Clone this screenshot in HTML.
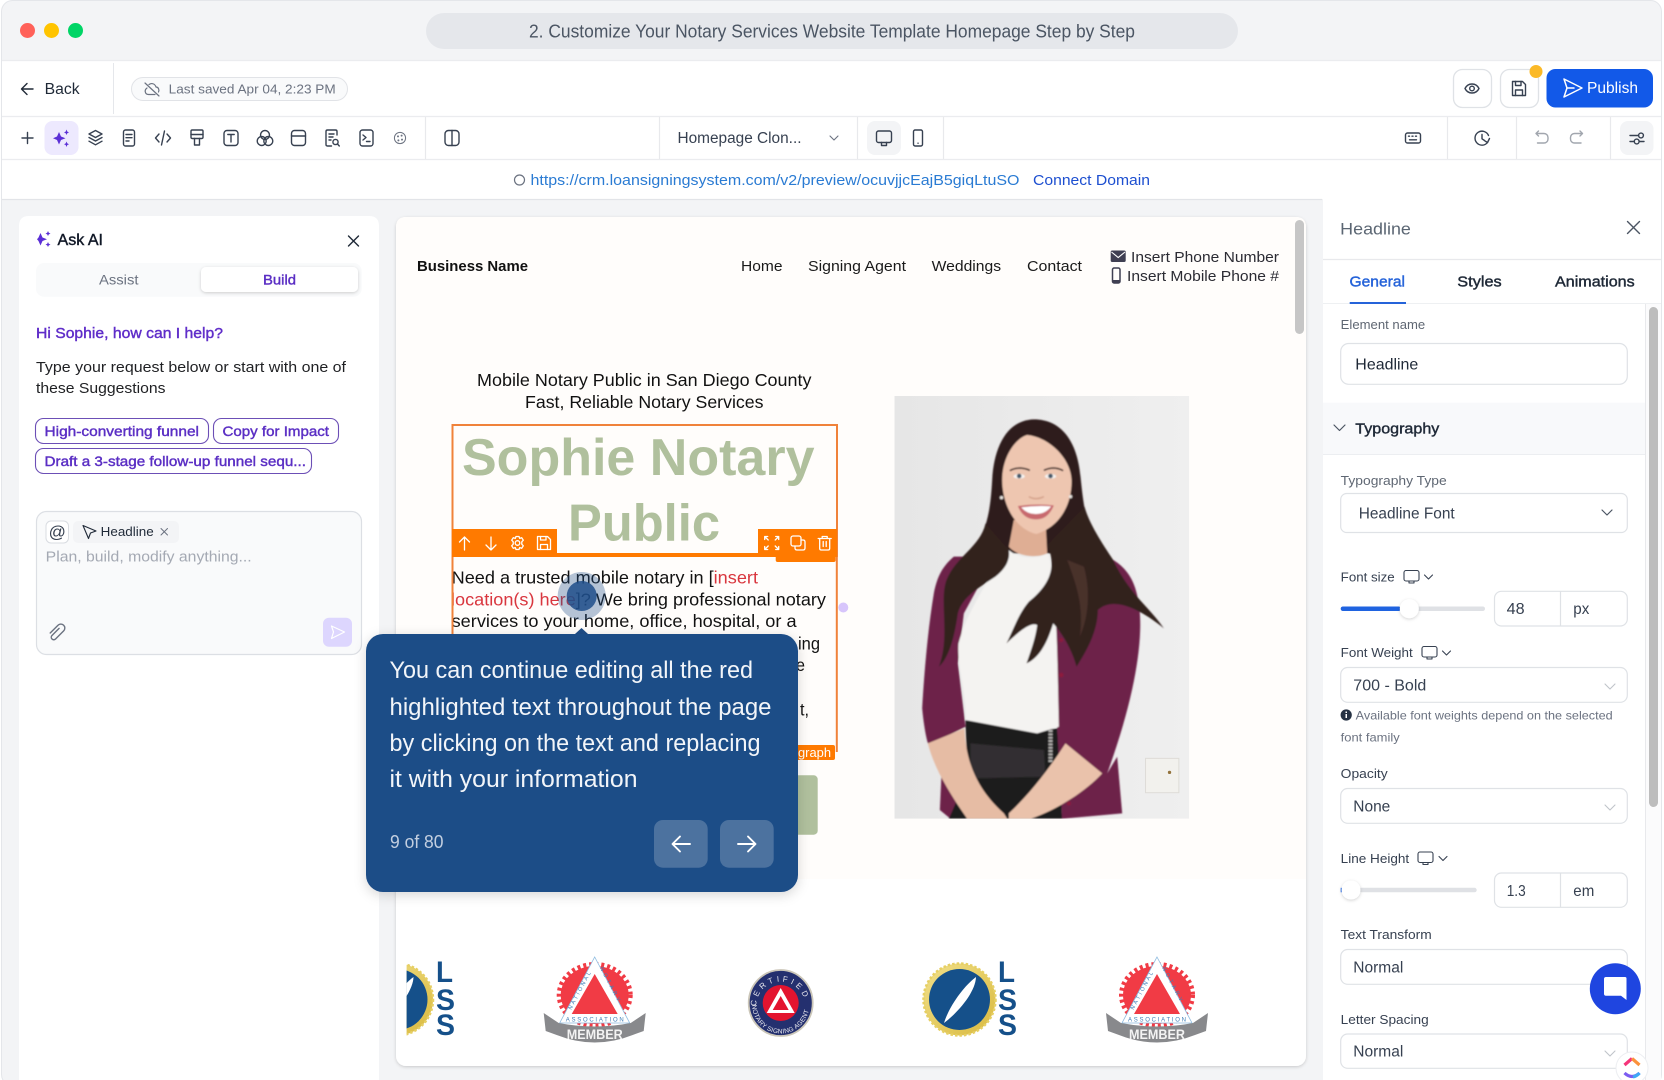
<!DOCTYPE html>
<html lang="en"><head><meta charset="utf-8"><title>Notary Website Builder</title>
<style>
html,body{margin:0;padding:0;background:#fff;width:1664px;height:1080px;overflow:hidden}
svg{display:block}
text{font-family:"Liberation Sans",sans-serif}
.m{stroke:currentColor;stroke-width:.42}
.i{fill:none;stroke:#374151;stroke-width:1.4;stroke-linecap:round;stroke-linejoin:round}
.w{fill:none;stroke:#fff;stroke-width:1.5;stroke-linecap:round;stroke-linejoin:round}
.box{fill:#fff;stroke:#dfe2e6;stroke-width:1.2}
.lb{font-size:13px;fill:#5f6773}
.val{font-size:15.5px;fill:#374151}
</style></head><body>
<svg xmlns="http://www.w3.org/2000/svg" width="1664" height="1080" viewBox="0 0 1664 1080">
<defs>
<filter id="sh" x="-10%" y="-10%" width="120%" height="125%"><feDropShadow dx="0" dy="3" stdDeviation="6" flood-color="#000" flood-opacity=".16"/></filter>
<filter id="sh2" x="-20%" y="-30%" width="140%" height="170%"><feDropShadow dx="0" dy="1" stdDeviation="1.5" flood-color="#000" flood-opacity=".18"/></filter>
<filter id="soft"><feGaussianBlur stdDeviation="2.4"/></filter>
<linearGradient id="wall" x1="0" x2="1" y1="0" y2="0"><stop offset="0" stop-color="#e6e6e6"/><stop offset="1" stop-color="#efefef"/></linearGradient>
<linearGradient id="gold" x1="0" x2="1" y1="0" y2="1"><stop offset="0" stop-color="#f1e08a"/><stop offset="1" stop-color="#d9b93e"/></linearGradient>
<clipPath id="c1"><rect x="406.6" y="950" width="60" height="100"/></clipPath>
<clipPath id="photoClip"><rect x="72" y="48" width="884" height="1268"/></clipPath>
<path id="pinTop" d="M-24.5 3A24.5 24.5 0 0 1 24.5 3"/>
<path id="pinBot" d="M-28.5 2A28.5 28.5 0 0 0 28.5 2"/>
</defs>

<!-- window -->
<rect x="1.5" y=".5" width="1660" height="1085" rx="11" fill="#f3f4f6" stroke="#e4e6ea"/>
<rect x="2" y="60" width="1659" height="139" fill="#fff"/>
<path d="M2 60.5H1661M2 116.5H1661M2 159.5H1661" stroke="#ebecef" stroke-width="1.2"/>
<path d="M2 199.5H1322" stroke="#e2e4e8" stroke-width="1.2"/>

<!-- title bar -->
<circle cx="27.5" cy="30.5" r="7.5" fill="#ff6159"/><circle cx="51.5" cy="30.5" r="7.5" fill="#ffc400"/><circle cx="75.5" cy="30.5" r="7.5" fill="#00d566"/>
<rect x="426" y="13" width="812" height="36" rx="18" fill="#e5e7eb"/>
<text x="529" y="37.5" font-size="18" fill="#4b5563" textLength="606" lengthAdjust="spacingAndGlyphs">2. Customize Your Notary Services Website Template Homepage Step by Step</text>

<!-- header -->
<path class="i" d="M33 89H22M27 83.5L21.5 89L27 94.5" style="stroke:#1f2937"/>
<text x="44.6" y="94" font-size="15.5" fill="#1f2937" textLength="35" lengthAdjust="spacingAndGlyphs">Back</text>
<path d="M113.5 63V114" stroke="#e5e7eb"/>
<rect x="131.5" y="77.5" width="216" height="23" rx="11.5" fill="#f9fafb" stroke="#e1e3e7"/>
<g transform="translate(152,89)" class="i" style="stroke:#6b7280;stroke-width:1.2"><path d="M-7 -6L7 7M-3 -4.5C0 -6.5 3 -5 4 -2C6.5 -2 7.5 1 6.5 3M3 5.5H-3.5C-7 5.5 -8 1 -5 -1"/></g>
<text x="168.7" y="93.5" font-size="13" fill="#6b7280" textLength="167" lengthAdjust="spacingAndGlyphs">Last saved Apr 04, 2:23 PM</text>

<rect x="1453.5" y="69.5" width="38" height="38" rx="9" fill="#fff" stroke="#dfe2e6" stroke-width="1.3"/>
<g transform="translate(1472,88.5)" class="i"><path d="M-7 0C-4 -6 4 -6 7 0C4 6 -4 6 -7 0Z"/><circle r="2.3"/></g>
<rect x="1500.5" y="69.5" width="38" height="38" rx="9" fill="#fff" stroke="#dfe2e6" stroke-width="1.3"/>
<g transform="translate(1519,88.5)" class="i"><path d="M-6.5 -7H3.5L6.5 -4V7H-6.5Z"/><path d="M-3.5 -7V-3H2V-7M-3.5 7V1.5H3.5V7"/></g>
<circle cx="1536" cy="71.5" r="6.5" fill="#fbb927"/>
<rect x="1546.5" y="69" width="106.5" height="38.5" rx="9" fill="#1259e8"/>
<path class="w" d="M1564 79L1582 88L1564 97L1567 88ZM1567 88H1574"/>
<text x="1587" y="93" font-size="15.5" fill="#fff" textLength="51" lengthAdjust="spacingAndGlyphs">Publish</text>

<!-- toolbar -->
<rect x="44.5" y="121" width="34" height="34" rx="8" fill="#ede9fe"/>
<rect x="867" y="121" width="34" height="34" rx="8" fill="#f3f4f6"/>
<rect x="1620" y="121" width="33.5" height="34" rx="8" fill="#f3f4f6"/>
<path d="M425.5 117V159M659.5 117V159M857.5 117V159M943.5 117V159M1447.5 117V159M1516.5 117V159M1610.5 117V159" stroke="#e8e9ec" stroke-width="1.2"/>
<path class="i" d="M27.5 132.5V143.5M22 138H33" style="stroke-width:1.4"/>
<g transform="translate(62,138)" fill="#5b2fd6"><path d="M-3 -6L-1 -1.5L3.5 0.3L-1 2L-3 6.5L-5 2L-9 0.3L-5 -1.5Z"/><path d="M4.5 -8.5L5.3 -6.4L7 -5.6L5.3 -4.8L4.5 -3L3.7 -4.8L2 -5.6L3.7 -6.4Z"/><path d="M4.5 3.5L5.3 5.4L7 6.2L5.3 7L4.5 9L3.7 7L2 6.2L3.7 5.4Z"/></g>
<g class="i">
<g transform="translate(95.5,138)"><path d="M0 -7.5L6.5 -4L0 -.5L-6.5 -4Z"/><path d="M-6.5 -.5L0 3L6.5 -.5M-6.5 3.2L0 6.8L6.5 3.2"/></g>
<g transform="translate(129,138)"><rect x="-5.5" y="-8" width="11" height="16" rx="2"/><path d="M-3 -3.5H3M-3 -.3H3M-3 3H0"/></g>
<g transform="translate(163,138)"><path d="M-4 -4L-7.5 0L-4 4M4 -4L7.5 0L4 4M1.5 -7L-1.5 7"/></g>
<g transform="translate(197,138)"><rect x="-6" y="-8" width="12" height="8.5" rx="1.2"/><path d="M-6 -3.5H6M-2.5 .5V7H2.5V.5"/></g>
<g transform="translate(231,138)"><rect x="-7" y="-7.5" width="14" height="15" rx="3"/><path d="M-3.2 -3.5H3.2M0 -3.5V4"/></g>
<g transform="translate(265,138)"><circle cy="-3" r="4.5"/><circle cx="-3.3" cy="3" r="4.5"/><circle cx="3.3" cy="3" r="4.5"/></g>
<g transform="translate(298.5,138)"><rect x="-7" y="-7.5" width="14" height="15" rx="3"/><path d="M-7 -2H7"/></g>
<g transform="translate(332,138)"><path d="M5 -3V-6.5C5 -7.4 4.4 -8 3.5 -8H-4.5C-5.4 -8 -6 -7.4 -6 -6.5V6.5C-6 7.4 -5.4 8 -4.5 8H-.5"/><path d="M-3 -4H2M-3 -1H1M-3 2H-1"/><circle cx="3.5" cy="4" r="2.6"/><path d="M5.5 6L7.3 8"/></g>
<g transform="translate(366,138)"><rect x="-6" y="-8" width="13" height="16" rx="2.5"/><path d="M-3 -3L0 -.5L-3 2M0.5 3.5H4"/></g>
<g transform="translate(400,138)" style="stroke-width:1;stroke:#6b7280"><circle r="5.6"/><circle cx="-2" cy="-1.6" r=".5"/><circle cx="1.6" cy="-2.4" r=".5"/><circle cx="2" cy="1.6" r=".5"/><circle cx="-1.6" cy="2.4" r=".5"/></g>
<g transform="translate(452,138)"><rect x="-7" y="-7.5" width="14" height="15" rx="3.5"/><path d="M0 -7.5V7.5"/></g>
<g transform="translate(884,138)"><rect x="-7.5" y="-7" width="15" height="11.5" rx="2"/><path d="M-2.5 4.5V7.5H2.5V4.5"/></g>
<g transform="translate(918,138)"><rect x="-4.5" y="-8" width="9" height="16" rx="1.6"/><path d="M0 5.2H.1"/></g>
<g transform="translate(1413,138)"><rect x="-7.5" y="-5" width="15" height="10" rx="2"/><path d="M-4.5 -1.8H-3.5M-1 -1.8H0M2.5 -1.8H3.5M-3.5 1.8H3.5"/></g>
<g transform="translate(1482,138)"><path d="M5.5 4.5A7 7 0 1 1 6.5 -2.5"/><path d="M0 -3.5V.8L2.5 2.5M7.5 .5L5.5 4.5L3 3"/></g>
<g transform="translate(1542.5,138)" style="stroke:#a1a6ae"><path d="M-4 -7L-6.5 -4.5L-4 -2M-6.5 -4.5H1.5A4 4 0 0 1 5.5 -.5V1A4 4 0 0 1 1.5 5H-5"/></g>
<g transform="translate(1576,138)" style="stroke:#a1a6ae"><path d="M4 -7L6.5 -4.5L4 -2M6.5 -4.5H-1.5A4 4 0 0 0 -5.5 -.5V1A4 4 0 0 0 -1.5 5H5"/></g>
<g transform="translate(1637,138)"><path d="M-7 -2.5H1.5M-7 3.5H-3M2.8 3.5H7"/><circle cx="4" cy="-2.5" r="2.4"/><circle cx="-.3" cy="3.5" r="2.4"/></g>
</g>
<text x="677.5" y="143" font-size="15.5" fill="#374151" textLength="124" lengthAdjust="spacingAndGlyphs">Homepage Clon...</text>
<path class="i" d="M830 136L834 140L838 136" style="stroke:#6b7280;stroke-width:1.1"/>

<!-- url row -->
<circle cx="519.5" cy="180" r="5" fill="none" stroke="#6b7280" stroke-width="1.2"/>
<text x="530.5" y="185.2" font-size="15" fill="#2a7bd3" textLength="489" lengthAdjust="spacingAndGlyphs">https://crm.loansigningsystem.com/v2/preview/ocuvjjcEajB5giqLtuSO</text>
<text x="1033" y="185.2" font-size="15" fill="#1d4fd0" textLength="117" lengthAdjust="spacingAndGlyphs">Connect Domain</text>

<!-- Ask AI panel -->
<path d="M19 1080V226Q19 216 29 216H369Q379 216 379 226V1080Z" fill="#fff"/>
<g transform="translate(43.5,239)" fill="#5b2fd6"><path d="M-3 -6L-1 -1.5L3.5 0.3L-1 2L-3 6.5L-5 2L-6.5 .3L-5 -1.5Z"/><path d="M4.5 -8L5.3 -6.2L7 -5.4L5.3 -4.6L4.5 -3L3.7 -4.6L2 -5.4L3.7 -6.2Z"/><path d="M4.5 3L5.3 4.8L7 5.6L5.3 6.4L4.5 8L3.7 6.4L2 5.6L3.7 4.8Z"/></g>
<text x="57.5" y="245" font-size="16" fill="#111827" class="m" style="color:#111827" textLength="45.5" lengthAdjust="spacingAndGlyphs">Ask AI</text>
<path class="i" d="M348.5 236L358.5 246M358.5 236L348.5 246" style="stroke:#1f2937"/>
<rect x="36" y="263" width="325.7" height="33.7" rx="8" fill="#f9fafb"/>
<rect x="201" y="267" width="157" height="25" rx="5" fill="#fff" filter="url(#sh2)"/>
<text x="99" y="284.7" font-size="14" fill="#6b7280" textLength="39.5" lengthAdjust="spacingAndGlyphs">Assist</text>
<text x="263" y="284.7" font-size="14" fill="#5b2fc4" class="m" style="color:#5b2fc4" textLength="33" lengthAdjust="spacingAndGlyphs">Build</text>
<text x="36" y="338" font-size="15" fill="#5f2dc9" class="m" style="color:#5f2dc9" textLength="187" lengthAdjust="spacingAndGlyphs">Hi Sophie, how can I help?</text>
<text x="36" y="372" font-size="15" fill="#1f2023" textLength="310" lengthAdjust="spacingAndGlyphs">Type your request below or start with one of</text>
<text x="36" y="393" font-size="15" fill="#1f2023" textLength="129.5" lengthAdjust="spacingAndGlyphs">these Suggestions</text>
<g fill="#fff" stroke="#6c4fb6" stroke-width="1.1">
<rect x="35.5" y="418.5" width="173" height="25" rx="8"/><rect x="213.5" y="418.5" width="125" height="25" rx="8"/><rect x="35.5" y="448.5" width="276" height="25" rx="8"/></g>
<g font-size="14" fill="#5b2fc4" class="m" style="color:#5b2fc4">
<text x="44.5" y="436" textLength="154.5" lengthAdjust="spacingAndGlyphs">High-converting funnel</text>
<text x="222.5" y="436" textLength="106.5" lengthAdjust="spacingAndGlyphs">Copy for Impact</text>
<text x="44.5" y="466" textLength="261.5" lengthAdjust="spacingAndGlyphs">Draft a 3-stage follow-up funnel sequ...</text></g>
<rect x="36.5" y="511.5" width="325" height="143" rx="10" fill="#f9fafb" stroke="#dcdfe4" stroke-width="1.2"/>
<rect x="46" y="521" width="22.5" height="22" rx="5" fill="#fff" stroke="#d9dce1"/>
<text x="57.2" y="537.5" font-size="17" text-anchor="middle" fill="#374151">@</text>
<rect x="73" y="521" width="106" height="22" rx="5" fill="#f3f4f6"/>
<path class="i" d="M83 525.5L96 531L90.5 533L88.5 538.5Z" style="stroke:#1f2937;stroke-width:1.1"/>
<text x="100.7" y="536" font-size="13" fill="#1f2937" textLength="53" lengthAdjust="spacingAndGlyphs">Headline</text>
<path class="i" d="M161 528.5L167.5 535M167.5 528.5L161 535" style="stroke:#6b7280;stroke-width:1"/>
<text x="45.7" y="561.5" font-size="15" fill="#a4a9b3" textLength="206" lengthAdjust="spacingAndGlyphs">Plan, build, modify anything...</text>
<g transform="translate(58,633) rotate(45)" class="i" style="stroke:#6b7280;stroke-width:1.4"><path d="M-2.5 -4V6A2.5 2.5 0 0 0 2.5 6V-5.5A4 4 0 0 0 -5.5 -5.5V5.5"/></g>
<rect x="323" y="617.7" width="29" height="29" rx="6" fill="#ddd6fe"/>
<path class="w" d="M331.5 626L344.5 632L331.5 638.5L333.5 632Z" style="stroke-width:1.2"/>

<!-- canvas -->
<rect x="396" y="217" width="910" height="849" rx="10" fill="#fff" filter="url(#sh2)"/>
<path d="M396 879V227Q396 217 406 217H1296Q1306 217 1306 227V879Z" fill="#fffdfb"/>
<rect x="1295" y="220" width="9" height="114" rx="4.5" fill="#c6c6c6"/>

<text x="417" y="271" font-size="15" font-weight="700" fill="#111" textLength="111" lengthAdjust="spacingAndGlyphs">Business Name</text>
<g font-size="15" fill="#1a1a1a">
<text x="741" y="271" textLength="41.5" lengthAdjust="spacingAndGlyphs">Home</text>
<text x="808" y="271" textLength="98" lengthAdjust="spacingAndGlyphs">Signing Agent</text>
<text x="931.6" y="271" textLength="69.5" lengthAdjust="spacingAndGlyphs">Weddings</text>
<text x="1027" y="271" textLength="55" lengthAdjust="spacingAndGlyphs">Contact</text>
<text x="1131" y="262" textLength="148" lengthAdjust="spacingAndGlyphs" fill="#2b2b33">Insert Phone Number</text>
<text x="1127" y="281" textLength="152" lengthAdjust="spacingAndGlyphs" fill="#2b2b33">Insert Mobile Phone #</text></g>
<rect x="1110.7" y="250.5" width="15" height="11.5" rx="1.5" fill="#3f3f52"/><path d="M1111.5 252L1118.2 257.5L1125 252" fill="none" stroke="#fff" stroke-width="1.1"/>
<rect x="1112.5" y="268" width="7.5" height="15" rx="1.6" fill="none" stroke="#3f3f52" stroke-width="1.5"/><rect x="1112.5" y="280" width="7.5" height="3" fill="#3f3f52"/>

<text x="477" y="386" font-size="17.5" fill="#111" textLength="334.5" lengthAdjust="spacingAndGlyphs">Mobile Notary Public in San Diego County</text>
<text x="525" y="408" font-size="17.5" fill="#111" textLength="238.5" lengthAdjust="spacingAndGlyphs">Fast, Reliable Notary Services</text>

<!-- photo -->
<svg x="894.5" y="396" width="294.7" height="422.7" viewBox="72 48 884 1268">
<g clip-path="url(#photoClip)">
<rect x="72" y="48" width="884" height="1268" fill="url(#wall)"/>
<rect x="825" y="1135" width="100" height="103" fill="#f2f1ed" stroke="#dedcd7" stroke-width="3"/>
<circle cx="897" cy="1177" r="5" fill="#93733c"/>
<g filter="url(#soft)">
<path d="M490 118C410 120 370 200 365 300C360 390 350 440 320 490L420 520L540 520L670 480C645 420 638 370 630 290C620 180 570 118 490 118Z" fill="#2f1d1d"/>
<path d="M250 530C215 560 200 590 190 640C170 760 160 900 155 985C160 1040 170 1090 175 1095L285 1040L262 850L280 700L340 590L300 530Z" fill="#6d2149"/>
<path d="M215 1140L208 1290L240 1316L300 1200Z" fill="#6d2149"/>
<path d="M555 680L575 540L690 520C760 550 800 590 808 700C815 800 790 960 710 1180L740 1130L755 1300L575 1316L560 1060Z" fill="#6d2149"/>
<path d="M285 1020L505 1050L560 1045L575 1316L235 1316L290 1190C290 1120 285 1070 285 1020Z" fill="#1f1b1e"/>
<path d="M300 1090L520 1110L525 1190L300 1195Z" fill="#322e31"/>
<path d="M540 1050V1150" stroke="#b3b1af" stroke-width="12" stroke-dasharray="6 4"/>
<path d="M430 420L525 420L530 520C500 535 440 530 415 500Z" fill="#dfae94"/>
<path d="M405 500C435 538 500 540 532 520C558 600 560 800 565 1040L500 1060L285 1020C290 950 258 850 264 790C290 690 360 600 405 500Z" fill="#f4f3f1"/>
<path d="M172 1090L282 1045C285 1130 310 1220 400 1300L410 1316L290 1316C230 1230 190 1160 172 1090Z" fill="#e6bca4"/>
<path d="M585 1090L695 1180C650 1230 560 1290 480 1316L415 1316L415 1300C480 1240 540 1160 585 1090Z" fill="#eac2ab"/>
<path d="M345 430C330 500 255 530 228 600C205 660 240 770 205 860C240 830 255 750 262 700C275 650 330 620 375 590C400 570 420 545 415 510Z" fill="#33201f"/>
<path d="M530 495C565 570 525 625 475 665C445 700 430 745 408 790C445 755 480 725 500 735C495 775 480 815 468 850C505 835 530 790 548 730C575 760 605 810 618 860C640 825 682 760 682 690C725 650 800 680 880 745C835 680 775 640 728 540C695 490 655 430 642 380Z" fill="#33201f"/>
<path d="M590 540C620 620 640 680 628 770C655 710 660 630 640 560Z" fill="#4a302c"/>
<path d="M395 300C395 225 440 172 470 165C530 170 600 230 603 300C605 370 570 440 497 462C430 445 395 370 395 300Z" fill="#eec6b0"/>
<path d="M418 272Q445 257 478 271" fill="none" stroke="#3a2523" stroke-width="5"/>
<path d="M520 271Q550 257 578 272" fill="none" stroke="#3a2523" stroke-width="5"/>
<ellipse cx="446" cy="289" rx="17" ry="7" fill="#f6f3f1"/><circle cx="446" cy="288" r="7" fill="#45596a"/>
<ellipse cx="540" cy="289" rx="17" ry="7" fill="#f6f3f1"/><circle cx="540" cy="288" r="7" fill="#45596a"/>
<path d="M475 350Q497 362 520 350" fill="none" stroke="#d6a48d" stroke-width="5"/>
<path d="M442 378Q497 370 550 376Q532 420 495 418Q458 418 442 378Z" fill="#c8696e"/>
<path d="M452 382Q497 376 542 379Q525 402 495 402Q470 402 452 382Z" fill="#fff"/>
<circle cx="393" cy="353" r="5" fill="#e8e4df"/><circle cx="600" cy="350" r="5" fill="#e8e4df"/>
<circle cx="572" cy="780" r="6" fill="#8c1c3e"/><circle cx="572" cy="885" r="7" fill="#8c1c3e"/><circle cx="595" cy="1270" r="6" fill="#8c1c3e"/>
</g></g></svg>

<!-- headline box -->
<text x="462" y="475" font-size="52" font-weight="700" fill="#b0c09d" textLength="352.5" lengthAdjust="spacingAndGlyphs">Sophie Notary</text>
<text x="568" y="540.7" font-size="52" font-weight="700" fill="#b0c09d" textLength="152" lengthAdjust="spacingAndGlyphs">Public</text>
<rect x="452.5" y="425" width="384.5" height="131" fill="none" stroke="#f0823a" stroke-width="2"/>
<rect x="775.7" y="552" width="60" height="10" rx="2" fill="#ff7a00"/>
<rect x="452" y="553" width="385" height="4" fill="#ff7a00"/>
<rect x="452" y="529" width="105" height="28" fill="#ff7a00"/>
<rect x="758" y="529" width="79" height="28" fill="#ff7a00"/>
<g class="w" style="stroke-width:1.3">
<path d="M464.5 550V537M459.5 542L464.5 537L469.5 542"/>
<path d="M491 537V550M486 545L491 550L496 545"/>
<g transform="translate(517.5,543)"><circle r="2.3"/><path d="M-1.5 -6.5H1.5L2.2 -4.6L4.2 -5.3L5.8 -2.8L4.3 -1.2V1.2L5.8 2.8L4.2 5.3L2.2 4.6L1.5 6.5H-1.5L-2.2 4.6L-4.2 5.3L-5.8 2.8L-4.3 1.2V-1.2L-5.8 -2.8L-4.2 -5.3L-2.2 -4.6Z"/></g>
<g transform="translate(544,543)"><path d="M-6.5 -6.5H3.5L6.5 -3.5V6.5H-6.5Z"/><path d="M-3.5 -6.5V-3H2V-6.5M-3.5 6.5V1.5H3.5V6.5"/></g>
<g transform="translate(771.7,543)"><path d="M-7 -3.5V-6.5H-4M4 -6.5H7V-3.5M7 3.5V6.5H4M-4 6.5H-7V3.5M-6.5 -6L-3.5 -3M6.5 -6L3.5 -3M6.5 6L3.5 3M-6.5 6L-3.5 3"/></g>
<g transform="translate(798,543)"><rect x="-7" y="-7" width="10" height="10" rx="2"/><path d="M3 -3H5Q7 -3 7 -1V5Q7 7 5 7H-1Q-3 7 -3 5V3"/></g>
<g transform="translate(824.7,543)"><path d="M-6.5 -4.5H6.5M-2.5 -4.5V-6.5H2.5V-4.5M-5 -4.5V5.5Q-5 7 -3.5 7H3.5Q5 7 5 5.5V-4.5M-1.5 -1.5V3.5M1.5 -1.5V3.5"/></g>
</g>

<!-- paragraph -->
<g font-size="17.5" fill="#111">
<text x="451.6" y="583.5" textLength="306.4" lengthAdjust="spacingAndGlyphs">Need a trusted mobile notary in [<tspan fill="#d9363e">insert</tspan></text>
<text x="451" y="605.5" textLength="375" lengthAdjust="spacingAndGlyphs"><tspan fill="#d9363e">location(s) here</tspan>]? We bring professional notary</text>
<text x="451.6" y="627" textLength="345" lengthAdjust="spacingAndGlyphs">services to your home, office, hospital, or a</text>
<text x="798" y="649.5" textLength="22" lengthAdjust="spacingAndGlyphs">ing</text>
<text x="796" y="671" textLength="9" lengthAdjust="spacingAndGlyphs">e</text>
<text x="800" y="715.5" textLength="9" lengthAdjust="spacingAndGlyphs">t,</text>
</g>
<path d="M452.5 557V752M836.8 557V752" stroke="#f0823a" stroke-width="2"/>
<rect x="780" y="745" width="55" height="15" rx="2" fill="#ff7a00"/>
<text x="798" y="757" font-size="13" fill="#fff" textLength="33" lengthAdjust="spacingAndGlyphs">graph</text>
<circle cx="843.3" cy="607.5" r="5" fill="#d7c5fb"/>
<rect x="700" y="775.3" width="117.7" height="59.4" rx="4" fill="#b0c09d"/>
<circle cx="581.7" cy="596" r="24" fill="#1f4e8a" fill-opacity=".33"/>
<circle cx="581.7" cy="596" r="15" fill="#1f4e8a" fill-opacity=".85"/>

<!-- logos -->
<g clip-path="url(#c1)">
<circle cx="397" cy="999.5" r="36" fill="url(#gold)" stroke="#e6cf63" stroke-width="2.5" stroke-dasharray="2.5 2"/>
<circle cx="397" cy="999.5" r="30.5" fill="#15508a"/>
<path d="M413.5 977C413 992 396 1012 381.5 1023C387 1005 402.5 985 413.5 977Z" fill="#fff"/>
<g font-size="30" font-weight="700" fill="#15508a"><text x="436" y="982" textLength="17" lengthAdjust="spacingAndGlyphs">L</text><text x="436" y="1010" textLength="19" lengthAdjust="spacingAndGlyphs">S</text><text x="436" y="1035" textLength="19" lengthAdjust="spacingAndGlyphs">S</text></g>
</g>
<circle cx="959.5" cy="999.5" r="36" fill="url(#gold)" stroke="#e6cf63" stroke-width="2.5" stroke-dasharray="2.5 2"/>
<circle cx="959.5" cy="999.5" r="30.5" fill="#15508a"/>
<path d="M976 977C975.5 992 958.5 1012 944 1023C949.5 1005 965 985 976 977Z" fill="#fff"/>
<g font-size="30" font-weight="700" fill="#15508a"><text x="998" y="982" textLength="17" lengthAdjust="spacingAndGlyphs">L</text><text x="998" y="1010" textLength="19" lengthAdjust="spacingAndGlyphs">S</text><text x="998" y="1035" textLength="19" lengthAdjust="spacingAndGlyphs">S</text></g>

<g transform="translate(594.7,0)">
<ellipse cx="0" cy="995" rx="34" ry="29" fill="#f13b45"/><ellipse cx="0" cy="995" rx="35.5" ry="30.5" fill="none" stroke="#f13b45" stroke-width="5" stroke-dasharray="3 3"/>
<path d="M0 957L35 1023H-35Z" fill="#fff" stroke="#8dbbe0" stroke-width=".8"/>
<path d="M0 974L23 1014H-23Z" fill="#f13b45"/>
<text transform="translate(-23.5,1010) rotate(-62)" font-size="5.5" fill="#3f7fb8" textLength="42">NATIONAL</text>
<text transform="translate(5,968) rotate(62)" font-size="5.5" fill="#3f7fb8" textLength="38">NOTARY</text>
<text x="-29" y="1021.5" font-size="6" fill="#3f7fb8" textLength="58">ASSOCIATION</text>
<path d="M-51 1013L-36 1023Q0 1030 36 1023L51 1013L49 1031L38 1035Q0 1050 -38 1035L-49 1031Z" fill="#88898c"/>
<text x="-28" y="1039" font-size="14" font-weight="700" fill="#f3f3f3" textLength="56" lengthAdjust="spacingAndGlyphs">MEMBER</text>
</g>
<g transform="translate(1157,0)">
<ellipse cx="0" cy="995" rx="34" ry="29" fill="#f13b45"/><ellipse cx="0" cy="995" rx="35.5" ry="30.5" fill="none" stroke="#f13b45" stroke-width="5" stroke-dasharray="3 3"/>
<path d="M0 957L35 1023H-35Z" fill="#fff" stroke="#8dbbe0" stroke-width=".8"/>
<path d="M0 974L23 1014H-23Z" fill="#f13b45"/>
<text transform="translate(-23.5,1010) rotate(-62)" font-size="5.5" fill="#3f7fb8" textLength="42">NATIONAL</text>
<text transform="translate(5,968) rotate(62)" font-size="5.5" fill="#3f7fb8" textLength="38">NOTARY</text>
<text x="-29" y="1021.5" font-size="6" fill="#3f7fb8" textLength="58">ASSOCIATION</text>
<path d="M-51 1013L-36 1023Q0 1030 36 1023L51 1013L49 1031L38 1035Q0 1050 -38 1035L-49 1031Z" fill="#88898c"/>
<text x="-28" y="1039" font-size="14" font-weight="700" fill="#f3f3f3" textLength="56" lengthAdjust="spacingAndGlyphs">MEMBER</text>
</g>
<g transform="translate(780.7,1003)">
<ellipse rx="32" ry="33" fill="#24306f" stroke="#cbc6b8" stroke-width="1.8"/>
<circle r="18" fill="#e3142f"/>
<path d="M0 -15L14 10H-14Z" fill="#fff"/><path d="M0 -7L8 7H-8Z" fill="#e3142f"/>
<text font-size="8" fill="#e8e8ee"><textPath href="#pinTop" textLength="68">CERTIFIED</textPath></text>
<text font-size="6.5" fill="#e8e8ee"><textPath href="#pinBot" textLength="84">NOTARY SIGNING AGENT</textPath></text>
</g>

<!-- tooltip -->
<path d="M575 634L581.5 628L588 634Z" fill="#1f4d87"/>
<rect x="366" y="634" width="432" height="258" rx="17" fill="#1f4d87" filter="url(#sh)"/>
<g font-size="24" fill="#f2f5f9">
<text x="389.5" y="678" textLength="363.5" lengthAdjust="spacingAndGlyphs">You can continue editing all the red</text>
<text x="389.5" y="715" textLength="382" lengthAdjust="spacingAndGlyphs">highlighted text throughout the page</text>
<text x="389.5" y="751" textLength="371" lengthAdjust="spacingAndGlyphs">by clicking on the text and replacing</text>
<text x="389.5" y="787" textLength="248" lengthAdjust="spacingAndGlyphs">it with your information</text>
</g>
<text x="390" y="848" font-size="18" fill="#c3cfe0" textLength="53.5" lengthAdjust="spacingAndGlyphs">9 of 80</text>
<rect x="654" y="820" width="53.7" height="47.7" rx="9" fill="#4c729f"/>
<rect x="720" y="820" width="53.7" height="47.7" rx="9" fill="#4c729f"/>
<path class="w" d="M690 844H673M680 836.5L672.5 844L680 851.5" style="stroke-width:1.9"/>
<path class="w" d="M738 844H755M748 836.5L755.5 844L748 851.5" style="stroke-width:1.9"/>

<!-- right panel -->
<rect x="1323" y="199" width="338" height="881" fill="#fff"/>
<text x="1340.2" y="234.5" font-size="17" fill="#5b6673" textLength="70.7" lengthAdjust="spacingAndGlyphs">Headline</text>
<path class="i" d="M1627.5 221.5L1639.5 233.5M1639.5 221.5L1627.5 233.5" style="stroke:#4b5563"/>
<path d="M1323 259.5H1661" stroke="#e8e9ec" stroke-width="1.3"/>
<path d="M1323 303.5H1661" stroke="#eef0f2"/>
<text x="1349.5" y="286.5" font-size="15" fill="#2563d9" class="m" style="color:#2563d9" textLength="55.5" lengthAdjust="spacingAndGlyphs">General</text>
<rect x="1349.7" y="302" width="56.3" height="2" fill="#2563d9"/>
<text x="1457.3" y="286.5" font-size="15" fill="#1f2937" class="m" style="color:#1f2937" textLength="44.4" lengthAdjust="spacingAndGlyphs">Styles</text>
<text x="1555" y="286.5" font-size="15" fill="#1f2937" class="m" style="color:#1f2937" textLength="79.7" lengthAdjust="spacingAndGlyphs">Animations</text>
<rect x="1645" y="304" width="16" height="776" fill="#fbfbfc"/><path d="M1645.5 304V1080" stroke="#e8e9ec"/>
<rect x="1649" y="307" width="9" height="500" rx="4.5" fill="#bdbdbd"/>

<text class="lb" x="1340.7" y="329" textLength="84.5" lengthAdjust="spacingAndGlyphs">Element name</text>
<rect class="box" x="1340.7" y="343.5" width="286.6" height="40.8" rx="8"/>
<text x="1355.3" y="369.5" font-size="16" fill="#1f2937" textLength="63" lengthAdjust="spacingAndGlyphs">Headline</text>

<rect x="1323" y="402.7" width="322" height="51.6" fill="#f8f9fb"/><path d="M1323 454.5H1645" stroke="#eceef1"/>
<path class="i" d="M1334 425L1339.5 430.5L1345 425" style="stroke:#4b5563;stroke-width:1.2"/>
<text x="1355.3" y="433.5" font-size="15" fill="#1f2937" class="m" style="color:#1f2937" textLength="84" lengthAdjust="spacingAndGlyphs">Typography</text>

<text class="lb" x="1340.7" y="485" textLength="106" lengthAdjust="spacingAndGlyphs">Typography Type</text>
<rect class="box" x="1340.7" y="493.5" width="286.6" height="39" rx="6"/>
<text x="1358.7" y="518.5" font-size="15.5" fill="#374151" textLength="96" lengthAdjust="spacingAndGlyphs">Headline Font</text>
<path class="i" d="M1602 510L1607 515L1612 510" style="stroke:#4b5563;stroke-width:1.2"/>

<text class="lb" x="1340.7" y="581.3" textLength="54" lengthAdjust="spacingAndGlyphs" style="fill:#374151">Font size</text>
<g class="i" style="stroke:#374151;stroke-width:1.1">
<g transform="translate(1411.5,576.5)"><rect x="-7.5" y="-6" width="15" height="10.5" rx="2"/><path d="M-2.5 4.5V6.5H2.5V4.5"/></g><path d="M1424.5 575L1428.5 579L1432.5 575"/>
<g transform="translate(1429.5,652.5)"><rect x="-7.5" y="-6" width="15" height="10.5" rx="2"/><path d="M-2.5 4.5V6.5H2.5V4.5"/></g><path d="M1442.5 651L1446.5 655L1450.5 651"/>
<g transform="translate(1425.5,858)"><rect x="-7.5" y="-6" width="15" height="10.5" rx="2"/><path d="M-2.5 4.5V6.5H2.5V4.5"/></g><path d="M1439 856.5L1443 860.5L1447 856.5"/>
</g>
<rect x="1340.7" y="606.5" width="144.3" height="4.5" rx="2.2" fill="#dfe1e5"/>
<rect x="1340.7" y="606.5" width="60" height="4.5" rx="2.2" fill="#1f63e0"/>
<circle cx="1409.3" cy="608.7" r="9.5" fill="#fff" filter="url(#sh2)"/>
<rect class="box" x="1494.5" y="591.3" width="132.8" height="34.7" rx="7"/><path d="M1560.5 591.5V626" stroke="#dfe2e6" stroke-width="1.2"/>
<text x="1506.7" y="614" font-size="16" fill="#374151" textLength="18" lengthAdjust="spacingAndGlyphs">48</text>
<text x="1573.3" y="614" font-size="16" fill="#374151" textLength="16" lengthAdjust="spacingAndGlyphs">px</text>

<text class="lb" x="1340.7" y="657" textLength="72" lengthAdjust="spacingAndGlyphs" style="fill:#374151">Font Weight</text>
<rect class="box" x="1340.7" y="667.5" width="286.6" height="34.8" rx="7"/>
<text x="1353.3" y="690.5" font-size="15.5" fill="#374151" textLength="73" lengthAdjust="spacingAndGlyphs">700 - Bold</text>
<path class="i" d="M1605 684L1610 689L1615 684" style="stroke:#c0c4ca;stroke-width:1.1"/>
<circle cx="1346.2" cy="715" r="5.6" fill="#263244"/><rect x="1345.5" y="714" width="1.5" height="4" fill="#fff"/><rect x="1345.5" y="711.5" width="1.5" height="1.5" fill="#fff"/>
<text x="1355.7" y="719.5" font-size="12" fill="#6b7280" textLength="257" lengthAdjust="spacingAndGlyphs">Available font weights depend on the selected</text>
<text x="1340.7" y="741.5" font-size="12" fill="#6b7280" textLength="59" lengthAdjust="spacingAndGlyphs">font family</text>

<text class="lb" x="1340.7" y="778" textLength="47" lengthAdjust="spacingAndGlyphs" style="fill:#374151">Opacity</text>
<rect class="box" x="1340.7" y="788.5" width="286.6" height="34.8" rx="7"/>
<text x="1353.3" y="811.5" font-size="15.5" fill="#374151" textLength="37" lengthAdjust="spacingAndGlyphs">None</text>
<path class="i" d="M1605 805L1610 810L1615 805" style="stroke:#c0c4ca;stroke-width:1.1"/>

<text class="lb" x="1340.7" y="863" textLength="68.5" lengthAdjust="spacingAndGlyphs" style="fill:#374151">Line Height</text>
<rect x="1340.7" y="887.8" width="136" height="4.5" rx="2.2" fill="#dfe1e5"/>
<rect x="1340.7" y="887.8" width="2.5" height="4.5" fill="#1f63e0"/>
<circle cx="1351" cy="890" r="9.5" fill="#fff" filter="url(#sh2)"/>
<rect class="box" x="1494.5" y="873" width="132.8" height="34.3" rx="7"/><path d="M1560.5 873V907" stroke="#dfe2e6" stroke-width="1.2"/>
<text x="1506.7" y="896" font-size="16" fill="#374151" textLength="19" lengthAdjust="spacingAndGlyphs">1.3</text>
<text x="1573.3" y="896" font-size="16" fill="#374151" textLength="21" lengthAdjust="spacingAndGlyphs">em</text>

<text class="lb" x="1340.7" y="939" textLength="91" lengthAdjust="spacingAndGlyphs" style="fill:#374151">Text Transform</text>
<rect class="box" x="1340.7" y="949.5" width="286.6" height="34.8" rx="7"/>
<text x="1353.3" y="972.5" font-size="15.5" fill="#374151" textLength="50" lengthAdjust="spacingAndGlyphs">Normal</text>

<text class="lb" x="1340.7" y="1024" textLength="88" lengthAdjust="spacingAndGlyphs" style="fill:#374151">Letter Spacing</text>
<rect class="box" x="1340.7" y="1034" width="286.6" height="34.3" rx="7"/>
<text x="1353.3" y="1056.7" font-size="15.5" fill="#374151" textLength="50" lengthAdjust="spacingAndGlyphs">Normal</text>
<path class="i" d="M1605 1051L1610 1056L1615 1051" style="stroke:#c0c4ca;stroke-width:1.1"/>

<circle cx="1615.3" cy="988.7" r="25.5" fill="#1f45e0"/>
<path d="M1606 977H1625Q1626.5 977 1626.5 978.5V1000L1621 995.8H1606Q1604 995.8 1604 993.8V979Q1604 977 1606 977Z" fill="#fff"/>

<circle cx="1632" cy="1068" r="16" fill="#fff" stroke="#eceef1"/>
<path d="M1624.5 1065L1632 1058.5" fill="none" stroke="#f5357a" stroke-width="3.2"/>
<path d="M1632 1058.5L1639.5 1065" fill="none" stroke="#fb923c" stroke-width="3.2"/>
<path d="M1624.5 1073Q1632 1080 1639.5 1073" fill="none" stroke="#7c5cf0" stroke-width="3.2"/>
<path d="M1633 1077Q1637 1076 1639.5 1073" fill="none" stroke="#3fa9f5" stroke-width="3.2"/>
</svg>
</body></html>
